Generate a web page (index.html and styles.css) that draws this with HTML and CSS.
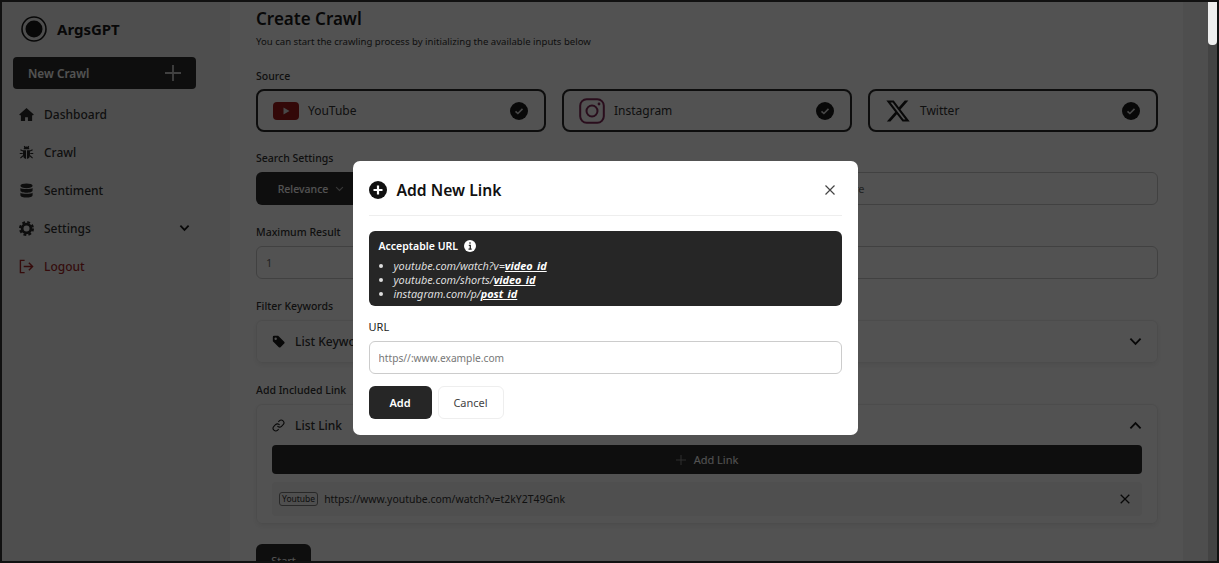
FILE: index.html
```html
<!DOCTYPE html>
<html lang="en">
<head>
    <meta charset="UTF-8">
    <meta name="viewport" content="width=device-width, initial-scale=1.0">
    <link rel="stylesheet" href="styles.css">
    <title>Create Crawl</title>
</head>
<body>
<div class="frame">
    <div class="page">
        <aside class="sidebar">
            <div class="brand">
                <svg class="logo" viewBox="0 0 26 26"><circle cx="13" cy="13" r="12" fill="none" stroke="#111" stroke-width="1.6"/><circle cx="13" cy="13" r="8.5" fill="#111"/></svg>
                <span>ArgsGPT</span>
            </div>
            <div class="new-crawl">
                <span>New Crawl</span>
                <svg class="plus" viewBox="0 0 16 16"><path d="M8 0v16M0 8h16" stroke="#c9c9c9" stroke-width="1.8"/></svg>
            </div>
            <nav class="menu">
                <a class="menu-item">
                    <svg class="menu-icon" viewBox="0 0 16 16"><path fill="#222" d="M8 1 .2 8l1 1.1L2 8.4V15h4.5v-4.2h3V15H14V8.4l.8.7 1-1.1z"/></svg>
                    <span>Dashboard</span>
                </a>
                <a class="menu-item">
                    <svg class="menu-icon" viewBox="0 0 16 16"><path fill="#222" d="M5 4.600a3 3 0 0 1 6 0zM4.300 5.600h3.200V15a4 4 0 0 1-3.200-3.600zM8.500 5.600h3.200v5.800A4 4 0 0 1 8.500 15z"/><path d="M5.500 1.200 6.700 3M10.500 1.200 9.300 3M4.300 6.500 1.500 5M4 9H.8M4.300 11.500 1.500 14M11.700 6.500 14.500 5M12 9h3.200M11.700 11.500l2.800 2.500" stroke="#222" stroke-width="1.200" fill="none"/></svg>
                    <span>Crawl</span>
                </a>
                <a class="menu-item">
                    <svg class="menu-icon" viewBox="0 0 16 16"><ellipse cx="8" cy="3" rx="6.500" ry="2.600" fill="#222"/><path fill="#222" d="M1.500 5.200c1.300 1.500 11.700 1.500 13 0v2.900c0 3.200-13 3.200-13 0zM1.500 10.300c1.300 1.500 11.700 1.500 13 0V13c0 3.300-13 3.300-13 0z"/></svg>
                    <span>Sentiment</span>
                </a>
                <a class="menu-item">
                    <svg class="menu-icon" viewBox="0 0 16 16"><circle cx="8" cy="8" r="4.700" fill="none" stroke="#222" stroke-width="3"/><circle cx="8" cy="8" r="6.800" fill="none" stroke="#222" stroke-width="2.400" stroke-dasharray="3 2.340"/></svg>
                    <span>Settings</span>
                    <svg class="menu-chevron" viewBox="0 0 12 8"><path d="M1.500 1.500 6 6l4.500-4.500" fill="none" stroke="#111" stroke-width="2"/></svg>
                </a>
                <a class="menu-item logout">
                    <svg class="menu-icon" viewBox="0 0 16 16"><path d="M6 1.500H1.500v13H6M5 8h9.500M10.500 4l4 4-4 4" fill="none" stroke="#a01c1c" stroke-width="1.500"/></svg>
                    <span>Logout</span>
                </a>
            </nav>
        </aside>

        <main class="main">
            <h1>Create Crawl</h1>
            <p class="subtitle">You can start the crawling process by initializing the available inputs below</p>

            <label class="field-label source-label">Source</label>
            <div class="sources">
                <div class="source-card">
                    <svg class="source-icon" viewBox="0 0 26 26"><rect y="4" width="26" height="18" rx="4" fill="#9a1010"/><path d="m10.500 9.500 6 3.500-6 3.500z" fill="#ddd"/></svg>
                    <span>YouTube</span>
                    <svg class="check" viewBox="0 0 18 18"><circle cx="9" cy="9" r="9" fill="#111"/><path d="m5.500 9.300 2.400 2.200 4.600-4.600" fill="none" stroke="#ddd" stroke-width="1.600"/></svg>
                </div>
                <div class="source-card">
                    <svg class="source-icon" viewBox="0 0 26 26"><rect x="1.200" y="1.200" width="23.600" height="23.600" rx="6.500" fill="none" stroke="#7a2050" stroke-width="2"/><circle cx="13" cy="13" r="5.500" fill="none" stroke="#7a2050" stroke-width="2"/><circle cx="20" cy="6" r="1.400" fill="#7a2050"/></svg>
                    <span>Instagram</span>
                    <svg class="check" viewBox="0 0 18 18"><circle cx="9" cy="9" r="9" fill="#111"/><path d="m5.500 9.300 2.400 2.200 4.600-4.600" fill="none" stroke="#ddd" stroke-width="1.600"/></svg>
                </div>
                <div class="source-card">
                    <svg class="source-icon" viewBox="0 0 24 24"><path fill="#111" d="M18.244 2.250h3.308l-7.227 8.260 8.502 11.240H16.170l-5.214-6.817L4.990 21.750H1.680l7.730-8.835L1.254 2.250H8.080l4.713 6.231zm-1.161 17.520h1.833L7.084 4.126H5.117z"/></svg>
                    <span>Twitter</span>
                    <svg class="check" viewBox="0 0 18 18"><circle cx="9" cy="9" r="9" fill="#111"/><path d="m5.500 9.300 2.400 2.200 4.600-4.600" fill="none" stroke="#ddd" stroke-width="1.600"/></svg>
                </div>
            </div>

            <label class="field-label search-label">Search Settings</label>
            <div class="search-row">
                <div class="select-btn">
                    <span>Relevance</span>
                    <svg class="select-chevron" viewBox="0 0 12 8"><path d="M1.500 1.500 6 6l4.500-4.500" fill="none" stroke="#aaa" stroke-width="1.500"/></svg>
                </div>
                <div class="text-input search-input">Enter the keyword of video title here</div>
            </div>

            <label class="field-label">Maximum Result</label>
            <div class="text-input">1</div>

            <label class="field-label">Filter Keywords</label>
            <div class="panel">
                <div class="panel-head">
                    <svg class="panel-icon" viewBox="0 0 16 16"><path fill="#111" d="M1 2.500A1.500 1.500 0 0 1 2.500 1h5.100l7.400 7.400a1.500 1.500 0 0 1 0 2.100l-4.500 4.500a1.500 1.500 0 0 1-2.100 0L1 7.600zM4.500 6a1.500 1.500 0 1 0 0-3 1.500 1.500 0 0 0 0 3z"/></svg>
                    <span>List Keywords</span>
                    <svg class="panel-chevron" viewBox="0 0 14 9"><path d="M1.500 1.500 7 7l5.500-5.500" fill="none" stroke="#111" stroke-width="2"/></svg>
                </div>
            </div>

            <label class="field-label">Add Included Link</label>
            <div class="panel">
                <div class="panel-head">
                    <svg class="panel-icon" viewBox="0 0 24 24"><path d="M10 13a5 5 0 0 0 7.540.54l3-3a5 5 0 0 0-7.070-7.070l-1.720 1.710M14 11a5 5 0 0 0-7.540-.54l-3 3a5 5 0 0 0 7.070 7.070l1.710-1.710" fill="none" stroke="#111" stroke-width="2"/></svg>
                    <span>List Link</span>
                    <svg class="panel-chevron" viewBox="0 0 14 9"><path d="M1.500 7.500 7 2l5.500 5.500" fill="none" stroke="#111" stroke-width="2"/></svg>
                </div>
                <div class="add-link">
                    <svg class="add-plus" viewBox="0 0 10 10"><path d="M5 0v10M0 5h10" stroke="#8a8a8a" stroke-width="1"/></svg>
                    <span>Add Link</span>
                </div>
                <div class="link-row">
                    <span class="link-tag">Youtube</span>
                    <span class="link-url">https://www.youtube.com/watch?v=t2kY2T49Gnk</span>
                    <svg class="link-remove" viewBox="0 0 10 10"><path d="m.7.7 8.600 8.600M9.300.7.700 9.300" stroke="#111" stroke-width="1.300"/></svg>
                </div>
            </div>

            <div class="start-btn">Start</div>
        </main>
        <div class="gutter"></div>

        <div class="overlay">
            <div class="modal">
                <div class="modal-head">
                    <svg class="modal-icon" viewBox="0 0 18 18"><circle cx="9" cy="9" r="9" fill="#111"/><path d="M9 4.500v9M4.500 9h9" stroke="#fff" stroke-width="2.200"/></svg>
                    <h2>Add New Link</h2>
                    <svg class="modal-close" viewBox="0 0 10 10"><path d="m.5.500 9 9M9.500.500l-9 9" stroke="#444" stroke-width="1.200"/></svg>
                </div>
                <div class="info-box">
                    <div class="info-title">
                        <span>Acceptable URL</span>
                        <svg class="info-icon" viewBox="0 0 12 12"><circle cx="6" cy="6" r="6" fill="#fff"/><path d="M6 2.300v1.500M4.800 5.300H6.300V9M4.500 9.200h3.200" stroke="#262626" stroke-width="1.300" fill="none"/></svg>
                    </div>
                    <ul class="info-list">
                        <li>youtube.com/watch?v=<b>video_id</b></li>
                        <li>youtube.com/shorts/<b>video_id</b></li>
                        <li>instagram.com/p/<b>post_id</b></li>
                    </ul>
                </div>
                <label class="url-label" for="url">URL</label>
                <input class="url-input" id="url" type="text" placeholder="https//:www.example.com">
                <div class="modal-actions">
                    <button class="btn-add" type="button">Add</button>
                    <button class="btn-cancel" type="button">Cancel</button>
                </div>
            </div>
        </div>
    </div>
    <div class="scrollbar"><div class="scroll-thumb"></div></div>
</div>
</body>
</html>
```

FILE: styles.css
```css
* {
    box-sizing: border-box;
}

html, body {
    margin: 0;
    height: 100%;
    overflow: hidden;
}

body {
    font-family: "Noto Sans", "Open Sans", sans-serif;
    font-size: 12px;
    color: #2b2b2b;
}

.frame {
    display: flex;
    width: 1219px;
    height: 563px;
    border: 2px solid #111;
    background-color: #fff;
}

.page {
    position: relative;
    display: flex;
    flex: 1;
    overflow: hidden;
}

/* sidebar */
.sidebar {
    width: 228px;
    flex-shrink: 0;
    padding: 13px 10px 0 11px;
    background-color: #f2f2f2;
}

.brand {
    display: flex;
    align-items: center;
    gap: 10px;
    height: 28px;
    padding-left: 8px;
    font-size: 15px;
    font-weight: 700;
    color: #111;
}

.logo {
    width: 26px;
    height: 26px;
}

.new-crawl {
    display: flex;
    align-items: center;
    justify-content: space-between;
    width: 183px;
    height: 32px;
    margin-top: 14px;
    padding: 0 15px 0 15px;
    border-radius: 4px;
    background-color: #262626;
    color: #fff;
    font-size: 11.800px;
    font-weight: 600;
}

.plus {
    width: 16px;
    height: 16px;
}

.menu {
    margin-top: 6px;
    width: 183px;
}

.menu-item {
    display: flex;
    align-items: center;
    gap: 10px;
    height: 38px;
    padding-left: 6px;
    font-size: 12px;
    font-weight: 500;
}

.menu-icon {
    width: 15px;
    height: 15px;
}

.menu-chevron {
    width: 11px;
    height: 8px;
    margin-left: auto;
    margin-right: 6px;
}

.logout {
    color: #a01c1c;
}

/* main content */
.main {
    flex: 1;
    padding: 6px 25px 0 26px;
    background-color: #fff;
}

.gutter {
    width: 25px;
    flex-shrink: 0;
    background-color: #f2f2f2;
}

h1 {
    margin: 0;
    font-size: 17px;
    line-height: 22px;
    font-weight: 600;
    color: #111;
}

.subtitle {
    margin: 5px 0 0;
    font-size: 9.600px;
    line-height: 14px;
}

.field-label {
    display: block;
    margin-top: 20px;
    margin-bottom: 6px;
    font-size: 10.500px;
    line-height: 15px;
    font-weight: 500;
}

.source-label {
    margin-top: 20px;
    margin-bottom: 5px;
}

.search-label {
    margin-top: 19px;
}

.sources {
    display: flex;
    gap: 16px;
}

.source-card {
    display: flex;
    flex: 1;
    align-items: center;
    gap: 9px;
    height: 43px;
    padding: 0 16px 0 15px;
    border: 2px solid #222;
    border-radius: 8px;
    font-size: 12px;
}

.source-icon {
    width: 26px;
    height: 26px;
}

.check {
    width: 18px;
    height: 18px;
    margin-left: auto;
}

.search-row {
    display: flex;
    gap: 12px;
}

.select-btn {
    display: flex;
    align-items: center;
    justify-content: center;
    gap: 7px;
    width: 110px;
    height: 33px;
    border-radius: 6px;
    background-color: #262626;
    color: #fff;
    font-size: 10.500px;
    font-weight: 500;
}

.select-chevron {
    width: 9px;
    height: 6px;
}

.text-input {
    height: 33px;
    padding: 0 9px;
    border: 1px solid #c8c8c8;
    border-radius: 6px;
    font-size: 11px;
    line-height: 31px;
    color: #666;
}

.search-input {
    flex: 1;
    padding-left: 298px;
}

.panel {
    min-height: 43px;
    padding: 0 15px;
    border: 1px solid #ececec;
    border-radius: 6px;
    box-shadow: 0 2px 6px rgba(0, 0, 0, .08);
}

.panel-head {
    display: flex;
    align-items: center;
    gap: 10px;
    height: 40px;
    font-size: 12px;
    font-weight: 500;
}

.panel-icon {
    width: 13px;
    height: 13px;
}

.panel-chevron {
    width: 13px;
    height: 9px;
    margin-left: auto;
}

.add-link {
    display: flex;
    align-items: center;
    justify-content: center;
    gap: 8px;
    height: 29px;
    border-radius: 4px;
    background-color: #262626;
    color: #fff;
    font-size: 11px;
}

.add-plus {
    width: 10px;
    height: 10px;
}

.link-row {
    display: flex;
    align-items: center;
    gap: 6px;
    height: 34px;
    margin-top: 8px;
    margin-bottom: 7px;
    padding: 0 12px 0 7px;
    border-radius: 4px;
    background-color: #f4f4f4;
    font-size: 10.450px;
}

.link-tag {
    padding: 0 2px;
    border: 1px solid #777;
    border-radius: 3px;
    font-size: 8.500px;
    line-height: 12px;
}

.link-remove {
    width: 10px;
    height: 10px;
    margin-left: auto;
}

.start-btn {
    width: 55px;
    height: 33px;
    margin-top: 20px;
    border-radius: 6px;
    background-color: #262626;
    color: #fff;
    font-size: 11px;
    line-height: 33px;
    text-align: center;
}

/* dimmed layer and modal */
.overlay {
    position: absolute;
    inset: 0;
    display: flex;
    justify-content: center;
    padding-top: 159px;
    background-color: rgba(5, 5, 5, .69);
}

.modal {
    width: 505px;
    height: 274px;
    padding: 0 16px;
    border-radius: 7px;
    background-color: #fff;
}

.modal-head {
    display: flex;
    align-items: center;
    gap: 10px;
    height: 55px;
    padding-top: 3px;
    border-bottom: 1px solid #eee;
}

.modal-icon {
    width: 18px;
    height: 18px;
}

h2 {
    margin: 0;
    font-size: 15.700px;
    font-weight: 600;
    color: #111;
}

.modal-close {
    width: 10px;
    height: 10px;
    margin-left: auto;
    margin-right: 7px;
}

.info-box {
    height: 75px;
    margin-top: 15px;
    padding: 7px 10px;
    border-radius: 6px;
    background-color: #262626;
    color: #fff;
    font-size: 10.500px;
}

.info-title {
    display: flex;
    align-items: center;
    gap: 6px;
    line-height: 16px;
    font-weight: 600;
}

.info-icon {
    width: 12px;
    height: 12px;
}

.info-list {
    margin: 5px 0 0;
    padding-left: 15px;
    font-size: 10.900px;
    line-height: 14px;
    font-style: italic;
    color: #ddd;
}

.info-list b {
    color: #fff;
    text-decoration: underline;
}

.url-label {
    display: block;
    margin-top: 13px;
    font-size: 11px;
    line-height: 16px;
    color: #222;
}

.url-input {
    display: block;
    width: 100%;
    height: 33px;
    margin-top: 6px;
    padding: 0 9px;
    border: 1px solid #ccc;
    border-radius: 6px;
    font-family: inherit;
    font-size: 10.200px;
}

.url-input::placeholder {
    color: #777;
}

.modal-actions {
    display: flex;
    gap: 6px;
    margin-top: 12px;
}

.btn-add, .btn-cancel {
    height: 33px;
    border-radius: 6px;
    font-family: inherit;
    font-size: 11px;
}

.btn-add {
    width: 63px;
    border: none;
    background-color: #262626;
    color: #fff;
    font-weight: 600;
}

.btn-cancel {
    width: 66px;
    border: 1px solid #eee;
    background-color: #fff;
    color: #444;
}

/* page scrollbar */
.scrollbar {
    width: 9px;
    flex-shrink: 0;
    background-color: #434343;
}

.scroll-thumb {
    height: 43px;
    background-color: #eee;
    border-bottom-left-radius: 4px;
    border-bottom-right-radius: 4px;
}
```
